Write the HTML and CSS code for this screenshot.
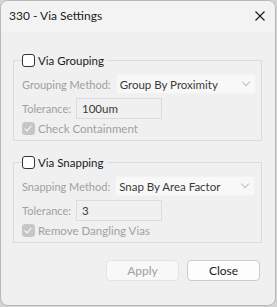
FILE: index.html
```html
<!DOCTYPE html>
<html lang="en">
<head>
    <meta charset="UTF-8">
    <title>330 - Via Settings</title>
    <link rel="stylesheet" href="styles.css">
</head>
<body>
    <div class="window">
        <div class="titlebar">
            <span class="title">330 - Via Settings</span>
            <svg class="close-x" width="10" height="10" viewBox="0 0 10 10">
                <path d="M0.5 0.5 L9.5 9.5 M9.5 0.5 L0.5 9.5" stroke="#1a1a1a" stroke-width="1.1" fill="none"/>
            </svg>
        </div>
        <div class="content">
            <fieldset class="group">
                <legend><span class="check"></span>Via Grouping</legend>
                <div class="row">
                    <span class="label">Grouping Method:</span>
                    <div class="select">Group By Proximity<span class="chevron"></span></div>
                </div>
                <div class="row">
                    <span class="label">Tolerance:</span>
                    <div class="input">100um</div>
                </div>
                <div class="row check-row">
                    <span class="check checked"></span>Check Containment
                </div>
            </fieldset>

            <fieldset class="group">
                <legend><span class="check"></span>Via Snapping</legend>
                <div class="row">
                    <span class="label">Snapping Method:</span>
                    <div class="select">Snap By Area Factor<span class="chevron"></span></div>
                </div>
                <div class="row">
                    <span class="label">Tolerance:</span>
                    <div class="input">3</div>
                </div>
                <div class="row check-row">
                    <span class="check checked"></span>Remove Dangling Vias
                </div>
            </fieldset>

            <div class="button-container">
                <button class="btn" disabled>Apply</button>
                <button class="btn primary">Close</button>
            </div>
        </div>
    </div>
</body>
</html>
```

FILE: styles.css
```css
body {
    margin: 0;
    background-color: #d4d4d4;
    font-family: Lato, "Open Sans", sans-serif;
    font-size: 11px;
    color: #1a1a1a;
}
.window {
    width: 276px;
    height: 306px;
    box-sizing: border-box;
    background-color: #f0f0f0;
    border: 1px solid #b8b8b8;
    border-radius: 8px;
    overflow: hidden;
}
.titlebar {
    height: 31px;
    background-color: #f3f3f3;
    display: flex;
    align-items: center;
    justify-content: space-between;
    padding: 0 10px 2px 8px;
    box-sizing: border-box;
}
.title {
    font-size: 12px;
}
.content {
    padding: 20px 13px 0 12px;
}
.group {
    margin: 0 0 13px 0;
    padding: 6px 9px 5px 8px;
    border: 1px solid #dcdcdc;
    min-inline-size: 0;
}
.group legend {
    display: flex;
    align-items: center;
    height: 16px;
    padding: 0 3px 0 0;
    margin-left: 0;
    color: #1a1a1a;
    font-size: 11.5px;
}
.check {
    display: inline-block;
    width: 11px;
    height: 11px;
    border: 1px solid #333333;
    border-radius: 3px;
    background-color: #ffffff;
    margin-right: 3px;
    position: relative;
}
.check.checked {
    background-color: #c6c6c6;
    border-color: #c6c6c6;
}
.check.checked::after {
    content: "";
    position: absolute;
    left: 3px;
    top: 1px;
    width: 3px;
    height: 6px;
    border-right: 1.2px solid #ffffff;
    border-bottom: 1.2px solid #ffffff;
    transform: rotate(40deg);
}
.row {
    display: flex;
    align-items: center;
    height: 20px;
    margin-bottom: 4px;
    color: #a0a0a0;
    font-size: 11.5px;
}
.check-row {
    height: 14px;
    margin-bottom: 0;
    margin-top: -1px;
}
.label {
    margin-right: 5px;
    white-space: nowrap;
    font-size: 11px;
}
.select {
    width: 140px;
    flex-shrink: 0;
    margin-left: auto;
    height: 20px;
    box-sizing: border-box;
    background-color: #f8f8f8;
    border: 1px solid #f2f2f2;
    display: flex;
    align-items: center;
    justify-content: space-between;
    padding: 0 6px 0 3px;
    color: #3a3a3a;
    white-space: nowrap;
}
.chevron {
    width: 5px;
    height: 5px;
    border-right: 1px solid #c0c0c0;
    border-bottom: 1px solid #c0c0c0;
    transform: rotate(45deg);
    margin-top: -4px;
}
.input {
    width: 86px;
    height: 21px;
    box-sizing: border-box;
    border: 1px solid #dcdcdc;
    padding: 0 5px;
    display: flex;
    align-items: center;
    color: #3a3a3a;
}
.button-container {
    display: flex;
    justify-content: flex-end;
    gap: 8px;
    margin-top: 17px;
    padding-right: 2px;
}
.btn {
    width: 73px;
    height: 21px;
    font-family: Lato, "Open Sans", sans-serif;
    font-size: 12px;
    border-radius: 4px;
    border: 1px solid #e4e4e4;
    background-color: #f8f8f8;
    color: #a0a0a0;
    padding: 0;
}
.btn.primary {
    background-color: #fdfdfd;
    border-color: #cccccc;
    color: #1a1a1a;
}
```
